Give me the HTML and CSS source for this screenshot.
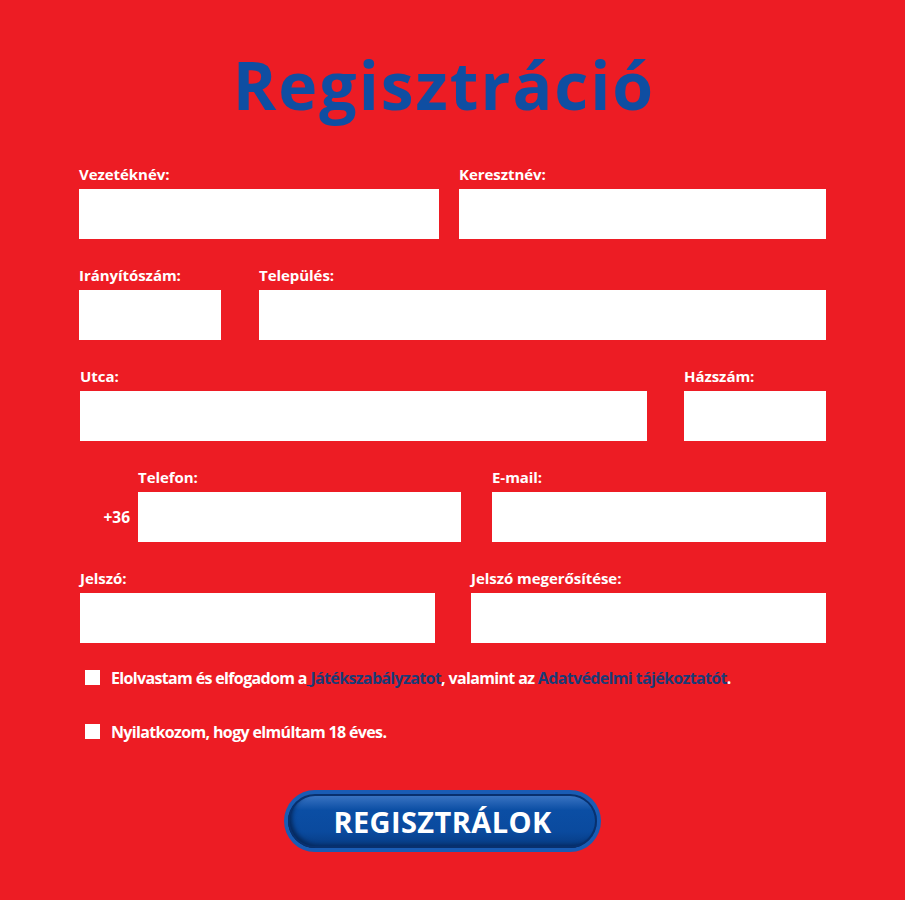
FILE: index.html
```html
<!DOCTYPE html>
<html lang="hu">
<head>
<meta charset="utf-8">
<title>Regisztráció</title>
<link rel="stylesheet" href="styles.css">
</head>
<body>
<main class="page">
  <h1 class="title">Regisztráció</h1>
  <form class="form">
    <div class="row row-1">
      <div class="field"><label class="label">Vezetéknév:</label><div class="input"></div></div>
      <div class="field"><label class="label">Keresztnév:</label><div class="input"></div></div>
    </div>
    <div class="row row-2">
      <div class="field"><label class="label">Irányítószám:</label><div class="input"></div></div>
      <div class="field"><label class="label">Település:</label><div class="input"></div></div>
    </div>
    <div class="row row-3">
      <div class="field"><label class="label">Utca:</label><div class="input"></div></div>
      <div class="field"><label class="label">Házszám:</label><div class="input"></div></div>
    </div>
    <div class="row row-4">
      <div class="prefix">+36</div>
      <div class="field"><label class="label">Telefon:</label><div class="input"></div></div>
      <div class="field"><label class="label">E-mail:</label><div class="input"></div></div>
    </div>
    <div class="row row-5">
      <div class="field"><label class="label">Jelszó:</label><div class="input"></div></div>
      <div class="field"><label class="label">Jelszó megerősítése:</label><div class="input"></div></div>
    </div>
    <div class="checks">
      <div class="check"><span class="box"></span><span class="check-text">Elolvastam és elfogadom a<a class="link"><span class="uline">&nbsp;</span>Játékszabályzatot</a>, valamint az <a class="link">Adatvédelmi tájékoztatót</a>.</span></div>
      <div class="check"><span class="box"></span><span class="check-text">Nyilatkozom, hogy elmúltam 18 éves.</span></div>
    </div>
    <div class="actions">
      <div class="btn"><div class="btn-inner">REGISZTRÁLOK</div></div>
    </div>
  </form>
</main>
</body>
</html>
```
FILE: styles.css
```css
html, body {
  margin: 0;
  padding: 0;
  background: #ed1c24;
}
body {
  font-family: "Open Sans", "Noto Sans", sans-serif;
  color: #ffffff;
}
.page {
  width: 905px;
  height: 900px;
  box-sizing: border-box;
  padding-top: 44px;
}
.title {
  margin: 0;
  padding-right: 17px;
  text-align: center;
  font-size: 66px;
  line-height: 80px;
  font-weight: 700;
  letter-spacing: 2px;
  color: #0f4ea2;
}
.form {
  margin: 41px 0 0 79px;
  width: 747px;
  display: flex;
  flex-direction: column;
  gap: 27px;
}
.row {
  display: grid;
  align-items: end;
}
.row-1 { grid-template-columns: 360px 1fr; column-gap: 20px; }
.row-2 { grid-template-columns: 142px 1fr; column-gap: 38px; }
.row-3 { grid-template-columns: 567px 1fr; column-gap: 37px; padding-left: 1px; }
.row-4 { grid-template-columns: 59px 323px 1fr; column-gap: 0; }
.row-4 .field:last-child { margin-left: 31px; }
.row-5 { grid-template-columns: 355px 1fr; column-gap: 36px; padding-left: 1px; }
.field {
  display: flex;
  flex-direction: column;
  gap: 6px;
}
.label {
  font-size: 15px;
  line-height: 18px;
  font-weight: 700;
  letter-spacing: -0.05px;
  white-space: nowrap;
}
.input {
  height: 50px;
  background: #ffffff;
}
.prefix {
  height: 50px;
  display: flex;
  align-items: center;
  justify-content: flex-end;
  padding-right: 8px;
  font-size: 15.5px;
  font-weight: 700;
}
.checks {
  margin-top: -3px;
  padding-left: 6px;
  display: flex;
  flex-direction: column;
  gap: 33px;
}
.check {
  display: flex;
  align-items: center;
  gap: 11px;
  height: 21px;
}
.box {
  width: 15px;
  height: 15px;
  background: #ffffff;
  flex: none;
}
.check-text {
  font-size: 16px;
  font-weight: 700;
  letter-spacing: -0.65px;
  white-space: nowrap;
}
.link {
  color: #1a3b76;
}
.uline {
  text-decoration: underline;
}
.actions {
  margin-top: 21px;
  display: flex;
  justify-content: center;
  padding-right: 20px;
}
.btn {
  width: 317px;
  height: 62px;
  box-sizing: border-box;
  padding: 4px;
  border-radius: 31px;
  background: #1a5cb4;
}
.btn-inner {
  position: relative;
  height: 100%;
  border-radius: 27px;
  background: linear-gradient(#3f78c6 0%, #0b4ea4 30%, #0a4a9e 70%, #073a80 100%);
  box-shadow: inset 0 0 0 2px #08306e, inset 4px -3px 4px #06285c;
  display: flex;
  align-items: center;
  justify-content: center;
  font-size: 29px;
  font-weight: 700;
  letter-spacing: 0.4px;
  color: #ffffff;
}
```
